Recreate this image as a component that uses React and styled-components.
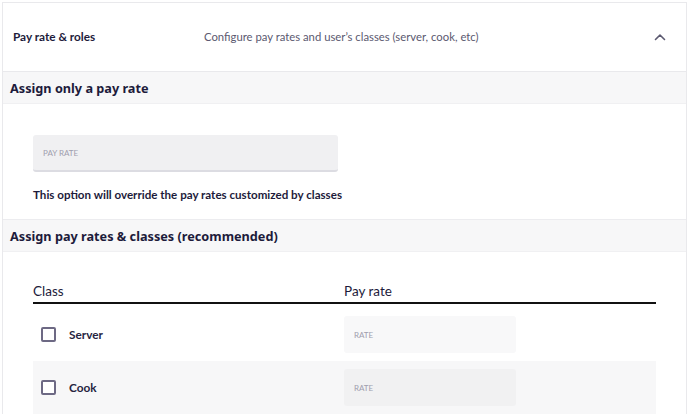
import React from "react";
import styled, { createGlobalStyle } from "styled-components";

const GlobalStyle = createGlobalStyle`
  body {
    margin: 0;
    background: #ffffff;
    font-family: "Lato", "Open Sans", sans-serif;
    color: #1d1b3b;
  }
`;

const Card = styled.div`
  margin: 2px 1px 0 2px;
  border: 1px solid #e9e9ec;
  border-bottom: none;
`;

const Header = styled.div`
  display: grid;
  grid-template-columns: 191px 1fr auto;
  align-items: center;
  height: 67px;
  padding: 0 20px 1px 10px;
  border-bottom: 1px solid #e9e9ec;
`;

const Title = styled.div`
  font-size: 11.8px;
  font-weight: 700;
  color: #1d1b3b;
`;

const Description = styled.div`
  font-size: 11.3px;
  color: #5b5970;
`;

const SectionHeader = styled.div`
  display: flex;
  align-items: center;
  height: 31px;
  padding: 0 7px;
  background: #f7f7f8;
  border-top: ${(p) => (p.$bordered ? "1px solid #ececef" : "none")};
  border-bottom: 1px solid #f0f0f2;
  font-family: "Noto Sans", "Open Sans", sans-serif;
  font-size: 12.7px;
  font-weight: 700;
  color: #1d1b3b;
`;

const Block = styled.div`
  padding: 31px 30px 18px;
`;

const PayInput = styled.input`
  display: block;
  box-sizing: border-box;
  width: 305px;
  height: 37px;
  padding: 0 10px;
  border: none;
  border-bottom: 2px solid #dcdce2;
  border-radius: 3px;
  background: #f0f0f2;
  font-family: "Lato", sans-serif;
  font-size: 8px;
  outline: none;
  &::placeholder {
    color: #9f9eae;
    text-transform: uppercase;
  }
`;

const Note = styled.p`
  margin: 16px 0 0;
  font-size: 11.6px;
  font-weight: 700;
  color: #1d1b3b;
`;

const Table = styled.div`
  padding: 31px 30px 0;
`;

const HeadRow = styled.div`
  display: grid;
  grid-template-columns: 311px 1fr;
  margin-bottom: 4px;
  padding-bottom: 3px;
  border-bottom: 2px solid #111111;
  font-size: 13.5px;
  color: #1d1b3b;
`;

const Row = styled.div`
  display: grid;
  grid-template-columns: 311px 1fr;
  align-items: center;
  height: 53px;
  background: ${(p) => (p.$shaded ? "#f7f7f8" : "transparent")};
`;

const ClassCell = styled.label`
  display: flex;
  align-items: center;
  gap: 13px;
  padding-left: 8px;
  font-size: 11.8px;
  font-weight: 700;
  color: #26243f;
`;

const Box = styled.span`
  box-sizing: border-box;
  width: 15px;
  height: 15px;
  border: 2px solid #6d6984;
  border-radius: 2px;
  background: #ffffff;
`;

const RateInput = styled.input`
  box-sizing: border-box;
  width: 172px;
  height: 37px;
  padding: 0 10px;
  border: none;
  border-radius: 3px;
  background: ${(p) => (p.$shaded ? "#f1f1f2" : "#f8f8f9")};
  font-family: "Lato", sans-serif;
  font-size: 8px;
  outline: none;
  &::placeholder {
    color: #9f9eae;
  }
`;

const Chevron = () => (
  <svg width="12" height="8" viewBox="0 0 12 8" fill="none">
    <path d="M1.5 6.5L6 2l4.5 4.5" stroke="#5b5970" strokeWidth="1.6" strokeLinecap="round" strokeLinejoin="round" />
  </svg>
);

const classes = ["Server", "Cook"];

export default function App() {
  return (
    <>
      <GlobalStyle />
      <Card>
        <Header>
          <Title>Pay rate &amp; roles</Title>
          <Description>Configure pay rates and user’s classes (server, cook, etc)</Description>
          <Chevron />
        </Header>
        <SectionHeader>Assign only a pay rate</SectionHeader>
        <Block>
          <PayInput placeholder="PAY RATE" />
          <Note>This option will override the pay rates customized by classes</Note>
        </Block>
        <SectionHeader $bordered>Assign pay rates &amp; classes (recommended)</SectionHeader>
        <Table>
          <HeadRow>
            <span>Class</span>
            <span>Pay rate</span>
          </HeadRow>
          {classes.map((name, i) => (
            <Row key={name} $shaded={i % 2 === 1}>
              <ClassCell>
                <Box />
                {name}
              </ClassCell>
              <RateInput placeholder="RATE" $shaded={i % 2 === 1} />
            </Row>
          ))}
        </Table>
      </Card>
    </>
  );
}
